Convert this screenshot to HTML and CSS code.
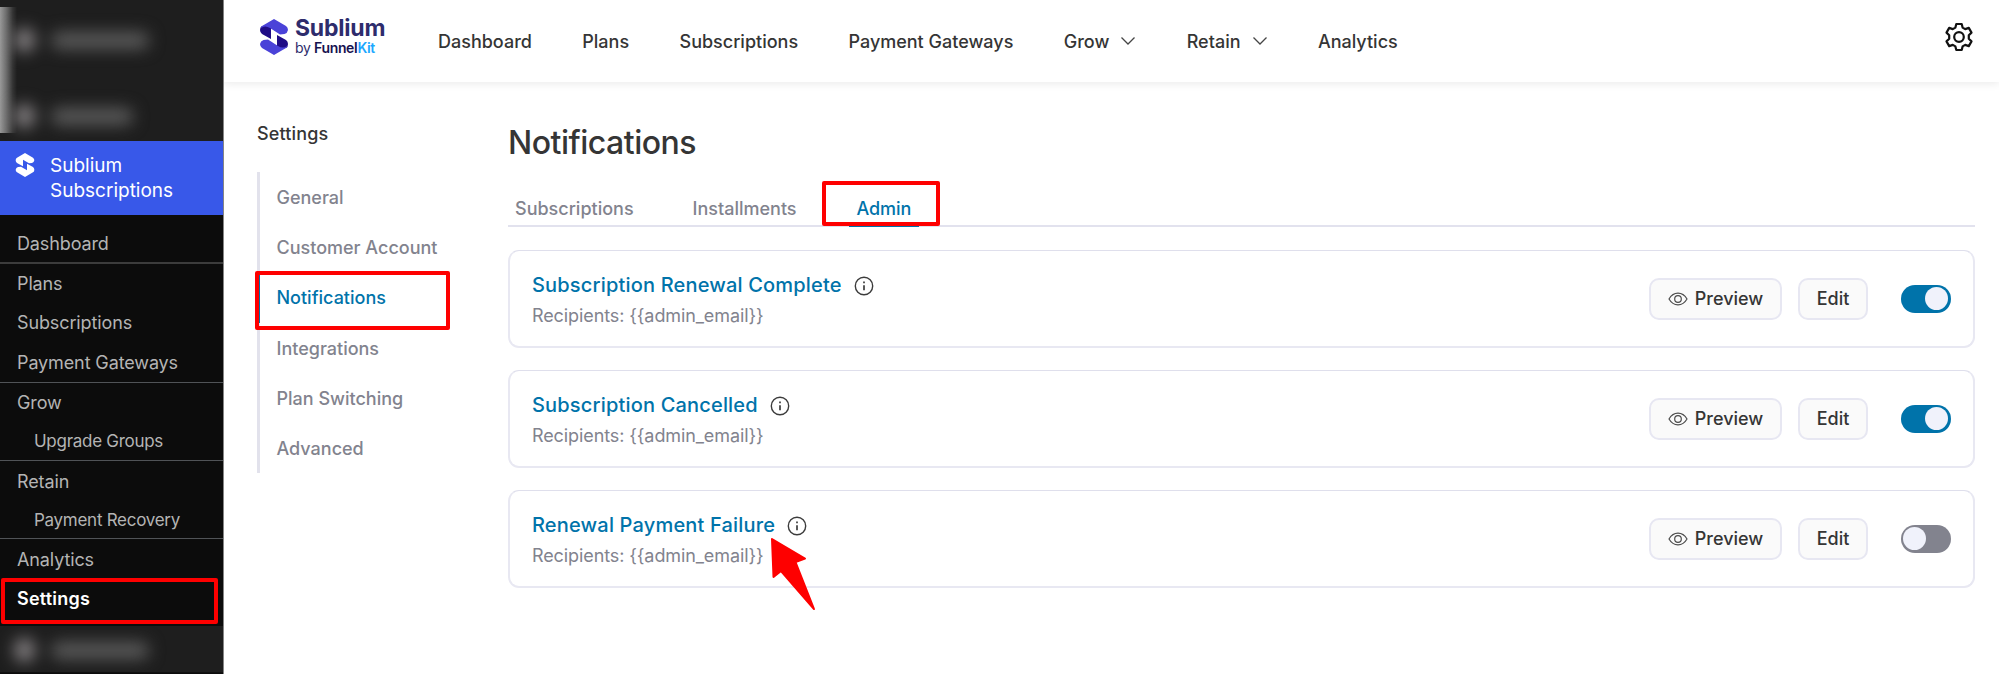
FILE: index.html
```html
<!DOCTYPE html>
<html lang="en">
<head>
  <meta charset="utf-8">
  <title>Notifications - Sublium</title>
  <link rel="stylesheet" href="styles.css">
</head>
<body>
<svg class="defs" width="0" height="0">
  <symbol id="eye" viewBox="0 0 20 14">
    <path d="M1 7C3.2 3.2 6.200 1.200 10 1.200S16.800 3.200 19 7C16.800 10.800 13.800 12.800 10 12.800S3.200 10.800 1 7z"/>
    <circle cx="10" cy="7" r="3.300"/>
  </symbol>
  <symbol id="info" viewBox="0 0 20 20">
    <circle cx="10" cy="10" r="8.700"/>
    <path d="M10 9.300v5" stroke-width="1.700"/>
    <path d="M10 5.600v1.700" stroke-width="1.700"/>
  </symbol>
  <symbol id="chevron" viewBox="0 0 16 10">
    <path d="M1.500 1.500L8 8l6.500-6.500"/>
  </symbol>
</svg>

<div class="app">
  <div class="sidebar">
    <div class="blurred top">
      <span class="edge"></span>
      <div class="smudge"><i class="dot"></i><i class="bar"></i></div>
      <div class="smudge second"><i class="dot"></i><i class="bar"></i></div>
    </div>
    <div class="current">
      <svg class="mark" width="20" height="24" viewBox="0 0 28 36">
        <path d="M14 0L26 7Q28 8.500 28 11Q27.500 14 24.500 15L20 15.500L11 10V20L2 15Q0 13.500 0 11Q0 8 2 7z"/>
        <path d="M14 36L2 29Q0 27.500 0 25Q.5 22 3.500 21L8 20.500L17 26V16L26 21Q28 22.500 28 25Q28 28 26 29z"/>
      </svg>
      <span>Sublium<br>Subscriptions</span>
    </div>
    <ul class="menu">
      <li class="first line">Dashboard</li>
      <li>Plans</li>
      <li>Subscriptions</li>
      <li class="tall line">Payment Gateways</li>
      <li>Grow</li>
      <li class="sub line">Upgrade Groups</li>
      <li class="tall">Retain</li>
      <li class="sub low line">Payment Recovery</li>
      <li class="tall">Analytics</li>
      <li class="active">Settings<span class="mark-box"></span></li>
    </ul>
    <div class="blurred bottom">
      <div class="smudge"><i class="dot"></i><i class="bar"></i></div>
    </div>
  </div>

  <div class="main">
    <div class="header">
      <div class="logo">
        <svg width="28" height="36" viewBox="0 0 28 36">
          <path fill="#1f0c86" d="M0 11Q0 8 2 7L14 6L11 10V20L2 15Q0 13.500 0 11z"/>
          <path fill="#1f0c86" d="M28 25Q28 28 26 29L14 30L17 26V16L26 21Q28 22.500 28 25z"/>
          <path fill="#4a42d8" d="M14 0L26 7Q28 8.500 28 11Q27.500 14 24.500 15L20 15.500L10 9Q5 6 1 9Q1 7.500 2 7z"/>
          <path fill="#4a42d8" d="M14 36L2 29Q0 27.500 0 25Q.5 22 3.500 21L8 20.500L18 27Q23 30 27 27Q27 28.500 26 29z"/>
        </svg>
        <div class="logo-text">
          <div class="name">Sublium</div>
          <div class="by">by <b>Funnel</b><b class="kit">Kit</b></div>
        </div>
      </div>
      <ul class="nav">
        <li>Dashboard</li>
        <li>Plans</li>
        <li>Subscriptions</li>
        <li>Payment Gateways</li>
        <li>Grow<svg class="chevron" width="16" height="10"><use href="#chevron"/></svg></li>
        <li>Retain<svg class="chevron" width="16" height="10"><use href="#chevron"/></svg></li>
        <li>Analytics</li>
      </ul>
      <svg class="gear" width="30" height="30" viewBox="0 0 30 30">
        <path d="M12.300 2h5.400l.9 3.600 2.600 1.500 3.600-1.200 2.700 4.700-2.700 2.600v3.600l2.700 2.600-2.700 4.700-3.600-1.200-2.600 1.500-.9 3.600h-5.400l-.9-3.600-2.600-1.500-3.600 1.200-2.700-4.700 2.700-2.600v-3.600l-2.700-2.600 2.700-4.700 3.600 1.200 2.600-1.500z"/>
        <circle cx="15" cy="15" r="4.800"/>
      </svg>
    </div>

    <div class="content">
      <div class="settings">
        <div class="settings-title">Settings</div>
        <ul class="settings-list">
          <li>General</li>
          <li>Customer Account</li>
          <li class="active">Notifications<span class="mark-box"></span></li>
          <li>Integrations</li>
          <li>Plan Switching</li>
          <li>Advanced</li>
        </ul>
      </div>

      <div class="page">
        <h1>Notifications</h1>
        <ul class="tabs">
          <li>Subscriptions</li>
          <li>Installments</li>
          <li class="active">Admin<span class="mark-box"></span></li>
        </ul>

        <div class="card">
          <div class="info">
            <div class="title">Subscription Renewal Complete<svg width="20" height="20"><use href="#info"/></svg></div>
            <div class="recipients">Recipients: {{admin_email}}</div>
          </div>
          <div class="btn preview"><svg width="20" height="14"><use href="#eye"/></svg>Preview</div>
          <div class="btn edit">Edit</div>
          <div class="toggle on"></div>
        </div>
        <div class="card">
          <div class="info">
            <div class="title">Subscription Cancelled<svg width="20" height="20"><use href="#info"/></svg></div>
            <div class="recipients">Recipients: {{admin_email}}</div>
          </div>
          <div class="btn preview"><svg width="20" height="14"><use href="#eye"/></svg>Preview</div>
          <div class="btn edit">Edit</div>
          <div class="toggle on"></div>
        </div>
        <div class="card">
          <div class="info">
            <div class="title">Renewal Payment Failure<svg width="20" height="20"><use href="#info"/></svg></div>
            <div class="recipients">Recipients: {{admin_email}}</div>
          </div>
          <div class="btn preview"><svg width="20" height="14"><use href="#eye"/></svg>Preview</div>
          <div class="btn edit">Edit</div>
          <div class="toggle"></div>
          <svg class="arrow" width="46" height="74" viewBox="0 0 46 74">
            <path d="M2 2L35 21.500L25.500 25L44 72L11 34L3.500 40z"/>
          </svg>
        </div>
      </div>
    </div>
  </div>
</div>
</body>
</html>
```

FILE: styles.css
```css
* {
  box-sizing: border-box;
}
body {
  margin: 0;
  background: #fff;
  font-family: Inter, "Liberation Sans", sans-serif;
  font-size: 18px;
  color: #353535;
}
ul,
li,
h1 {
  margin: 0;
  padding: 0;
  list-style: none;
}
.defs {
  position: absolute;
}
.app {
  display: flex;
  height: 675px;
  overflow: hidden;
}

/* sidebar */
.sidebar {
  width: 224px;
  height: 674px;
  flex: none;
  background: #0c0c0c;
  border-right: 1px solid #858585;
}
.blurred {
  position: relative;
  overflow: hidden;
  background: #1e1e1e;
}
.blurred.top {
  height: 141px;
  padding: 24px 0 0 14px;
}
.blurred.bottom {
  height: 47px;
  padding: 8px 0 0 14px;
  border-bottom: 1px solid #111;
}
.edge {
  position: absolute;
  left: 0;
  top: 7px;
  width: 17px;
  height: 126px;
  background: linear-gradient(to right, #999, #6f6f6f 35%, #343434 75%, #1e1e1e);
}
.smudge {
  display: flex;
  align-items: center;
  gap: 16px;
  height: 32px;
  filter: blur(8px);
}
.smudge.second {
  margin-top: 44px;
}
.smudge .dot {
  width: 21px;
  height: 24px;
  border-radius: 50%;
  background: #858183;
}
.smudge .bar {
  width: 98px;
  height: 17px;
  border-radius: 8px;
  background: #5a5a5a;
}
.smudge.second .bar {
  width: 82px;
}
.current {
  display: flex;
  gap: 15px;
  height: 74px;
  padding: 12px 0 0 15px;
  background: #3858e9;
  color: #fff;
  font-size: 19px;
  line-height: 25px;
}
.current .mark {
  fill: #fff;
}
.menu {
  height: 411px;
  padding-top: 10px;
  color: #b4b4b4;
  letter-spacing: -.12px;
}
.menu li {
  position: relative;
  height: 39px;
  line-height: 39px;
  padding-left: 17px;
}
.menu .tall {
  height: 40px;
  line-height: 41px;
}
.menu .sub {
  height: 38px;
  line-height: 38px;
  padding-left: 34px;
  font-size: 17px;
  letter-spacing: -.28px;
}
.menu .low {
  height: 37px;
  line-height: 38px;
}
.menu .line {
  box-sizing: content-box;
  border-bottom: 1px solid #505357;
}
.menu .first {
  height: 37px;
  line-height: 37px;
  border-bottom: 2px solid #3c3c3c;
}
.menu .active {
  color: #fff;
  font-weight: 600;
  letter-spacing: .2px;
}

/* red highlight */
.mark-box {
  position: absolute;
  z-index: 1;
  border: 4px solid #fe0000;
  border-radius: 2px;
}
.menu .mark-box {
  left: 1px;
  top: -1px;
  width: 217px;
  height: 46px;
}

/* header */
.main {
  flex: 1;
}
.header {
  display: flex;
  align-items: center;
  height: 82px;
  padding: 0 25px 0 36px;
  box-shadow: 0 2px 8px rgba(0, 0, 0, .08);
}
.logo {
  display: flex;
  gap: 7px;
  width: 178px;
  margin-bottom: 8px;
}
.logo .name {
  margin-top: -3px;
  font-size: 23px;
  line-height: 25px;
  font-weight: 700;
  letter-spacing: -.2px;
  color: #2e2c6c;
}
.logo .by {
  font-size: 14px;
  line-height: 14px;
  letter-spacing: -.35px;
  color: #2e2c6c;
}
.logo .by b {
  font-weight: 600;
  color: #17124f;
}
.logo .by .kit {
  color: #1ca8ff;
}
.nav {
  display: flex;
  flex: 1;
  gap: 50.4px;
  font-weight: 500;
}
.chevron {
  margin: 0 0 2px 11px;
  fill: none;
  stroke: #454545;
  stroke-width: 1.3;
}
.gear {
  margin-bottom: 8px;
  fill: none;
  stroke: #111;
  stroke-width: 2.2;
  stroke-linejoin: round;
}

/* content */
.content {
  display: flex;
  padding: 0 24px 0 33px;
}
.settings {
  width: 251px;
  padding-top: 40px;
}
.settings-title {
  line-height: 23px;
  font-weight: 500;
  letter-spacing: .15px;
}
.settings-list {
  margin-top: 27px;
  color: #82838e;
  font-weight: 500;
}
.settings-list li {
  position: relative;
  height: 50.2px;
  line-height: 51.5px;
  padding-left: 16.5px;
  border-left: 3px solid #e2e2ec;
}
.settings-list .active {
  color: #0073aa;
  border-color: #0073aa;
}
.settings-list .mark-box {
  left: -5px;
  top: -1px;
  width: 195px;
  height: 59px;
}
.page {
  flex: 1;
  padding-top: 39px;
}
h1 {
  font-size: 32px;
  line-height: 43px;
  font-weight: 500;
  letter-spacing: -.5px;
}
.tabs {
  display: flex;
  height: 47px;
  margin: 16px 0 23px;
  gap: 44px;
  border-bottom: 2px solid #e2e2ee;
  color: #82838e;
  font-weight: 500;
}
.tabs li {
  position: relative;
  height: 47px;
  line-height: 57px;
  padding: 0 8px 0 7px;
}
.tabs .active {
  padding: 0 8px;
  border-bottom: 3px solid #0073aa;
  color: #0073aa;
  letter-spacing: -.1px;
}
.tabs .mark-box {
  left: -26.5px;
  top: 1px;
  width: 118px;
  height: 45px;
}
.card {
  position: relative;
  display: flex;
  align-items: center;
  height: 98px;
  margin-bottom: 22px;
  padding: 0 22px 0 22px;
  border: 2px solid #e8e8f2;
  border-top: 1px solid #dfdfec;
  border-radius: 11px;
}
.info {
  flex: 1;
  padding-top: 3px;
}
.title {
  display: flex;
  align-items: center;
  gap: 12px;
  font-size: 20px;
  line-height: 30px;
  font-weight: 500;
  letter-spacing: .18px;
  color: #0073aa;
}
.title svg {
  margin-top: 3px;
  fill: none;
  stroke: #3c3c3c;
  stroke-width: 1.4;
}
.recipients {
  line-height: 31px;
  letter-spacing: -.1px;
  color: #82838e;
}
.btn {
  display: flex;
  align-items: center;
  justify-content: center;
  height: 42px;
  border: 2px solid #e7e7f2;
  border-radius: 10px;
  background: #fafafa;
  font-weight: 500;
}
.preview {
  width: 133px;
  gap: 7px;
  margin-right: 16px;
}
.preview svg {
  fill: none;
  stroke: #4c4c4c;
  stroke-width: 1.2;
}
.edit {
  width: 70px;
  margin-right: 33px;
}
.toggle {
  display: flex;
  align-items: center;
  width: 50px;
  height: 28px;
  padding: 0 3px 0 2px;
  border-radius: 14px;
  background: #82838e;
}
.toggle:after {
  content: '';
  width: 23px;
  height: 23px;
  border-radius: 50%;
  background: #f0f2fb;
}
.toggle.on {
  justify-content: flex-end;
  background: #0073aa;
}
.arrow {
  position: absolute;
  left: 260px;
  top: 46px;
  fill: #fe0000;
  stroke: #fe0000;
  stroke-width: 2;
  stroke-linejoin: round;
}
```
